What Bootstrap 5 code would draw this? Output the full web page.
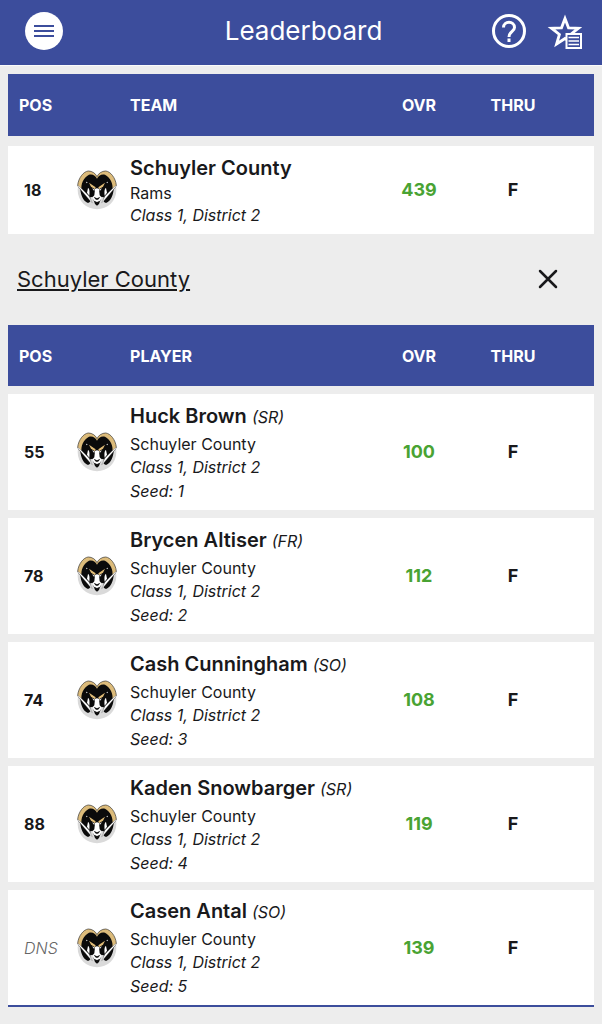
<!DOCTYPE html>
<html lang="en">
<head>
<meta charset="utf-8">
<meta name="viewport" content="width=device-width, initial-scale=1">
<title>Leaderboard</title>
<link href="https://cdn.jsdelivr.net/npm/bootstrap@5.3.0/dist/css/bootstrap.min.css" rel="stylesheet">
<style>
  :root { --brand: #3c4d9c; --page: #ededed; --ink: #19191b; --score: #49a333; }
  body { background: var(--page); color: var(--ink); font-family: Inter, "Liberation Sans", sans-serif; font-size: 16px; line-height: 24px; }
  .topbar { background: var(--brand); height: 66px; padding: 0 20px 3px 25px; border-bottom: 1px solid #fafafa; }
  .topbar h1 { font-size: 26px; line-height: 32px; }
  .side { flex: 1 1 0; }
  .menu-btn { width: 38px; height: 38px; color: var(--brand); }
  .help-btn { margin-right: 18px; }
  .board { table-layout: fixed; border-collapse: separate; border-spacing: 0; }
  .board th, .board td { padding: 0; vertical-align: middle; background-clip: padding-box; border: 0 solid var(--page); border-bottom-width: 8px; }
  .board th { background-color: var(--brand); color: #fff; height: 69px; font-weight: 700; }
  .board td { background-color: #fff; }
  .board.team-board th { border-bottom-width: 10px; height: 72px; }
  .board tbody tr:last-child td { border-bottom-width: 0; }
  .player-board tbody tr:last-child td { border-bottom: 2px solid var(--brand); }
  .player-board td { height: 124px; }
  .player-board tbody tr:last-child td { height: 117px; }
  .team-board td { height: 88px; }
  .board th.pos { padding-left: 11px; }
  .board td.pos { padding-left: 16px; font-weight: 700; }
  .c-pos { width: 69px; } .c-logo { width: 53px; } .c-num { width: 94px; } .c-end { width: 34px; }
  .board .num { text-align: center; font-weight: 700; }
  .board td.ovr { color: var(--score); font-size: 18px; }
  .board td.thru { font-size: 18px; }
  .who { font-size: 20px; line-height: 28px; font-weight: 600; }
  .player-board .who { line-height: 30px; }
  .alt { font-style: italic; font-weight: 400; font-size: 16px; }
  .board td .dns { color: #666; font-weight: 300; }
  .tight { line-height: 22px; }
  .seed { line-height: 26px; }
  .logo { width: 40px; height: 40px; display: block; }
  .section-title { font-size: 22px; line-height: 28px; font-weight: 400; }
  .section-head { height: 91px; padding: 0 33px 2px 9px; }
</style>
</head>
<body>
<svg class="d-none" xmlns="http://www.w3.org/2000/svg">
  <symbol id="ram" viewBox="0 0 120 120">
    <circle cx="60" cy="60" r="58" fill="#dadada"/>
    <path d="M0 0H120V46L60 70 0 46Z" fill="#fff"/>
    <path d="M60 20C56 10 45 3 34 3 20 4 4 24 2 46L16 66 60 50 104 66 118 46C116 24 100 4 86 3 75 3 64 10 60 20Z" fill="#dcbb7a" stroke="#333" stroke-width="2"/>
    <path d="M60 26C56 16 46 11 36 14 20 22 10 42 14 62L34 84 46 80 54 102 60 107 66 102 74 80 86 84 106 62C110 42 100 22 84 14 74 11 64 16 60 26Z" fill="#0b0b0b"/>
    <path d="M10 56C11 76 19 92 31 98 40 99 43 92 38 80L18 52ZM110 56C109 76 101 92 89 98 80 99 77 92 82 80L102 52Z" fill="#0b0b0b"/>
    <path d="M0 46 6 48 36 78 46 98 40 93ZM120 46 114 48 84 78 74 98 80 93Z" fill="#fff" stroke="#555" stroke-width="1"/>
    <path d="M33 54C38 56 38 66 37 77L30 68ZM87 54C82 56 82 66 83 77L90 68Z" fill="#fff"/>
    <path d="M36 38 56 52 54 58 42 50ZM84 38 64 52 66 58 78 50Z" fill="#e1bd78"/>
    <path d="M45 55 54 59 51 62ZM75 55 66 59 69 62ZM27 35l5 2-3 3ZM93 35l-5 2 3 3Z" fill="#fff"/>
    <path d="M54 57Q60 53 66 57L68 76 75 83 68 93 60 98 52 93 45 83 52 76Z" fill="#fff"/>
    <path d="M50 80 60 85 70 80 65 88 60 90 55 88ZM52 93 60 96 68 93 60 102Z" fill="#151515"/>
  </symbol>
</svg>

<header class="topbar d-flex align-items-center text-white">
  <div class="side">
    <button type="button" class="menu-btn btn btn-light bg-white border-0 rounded-circle p-0 d-flex align-items-center justify-content-center" aria-label="Menu">
      <svg width="20" height="14" viewBox="0 0 20 14" stroke="currentColor" stroke-width="2"><path d="M0 2h20M0 7h20M0 12h20"/></svg>
    </button>
  </div>
  <h1 class="m-0 fw-normal">Leaderboard</h1>
  <div class="side d-flex justify-content-end">
    <button type="button" class="help-btn btn border-0 p-0 text-white" aria-label="Help">
      <svg width="40" height="40" viewBox="0 0 40 40" fill="none" stroke="currentColor" stroke-width="3"><circle cx="20" cy="20" r="15.500"/><path d="M14.500 16.500C14.500 9.500 25.500 9.500 25.500 16.500 25.500 20.500 20 20.500 20 26M20 27.500v3.500"/></svg>
    </button>
    <button type="button" class="btn border-0 p-0 text-white" aria-label="Favorites list">
      <svg width="35" height="40" viewBox="0 0 35 40" fill="none" stroke="currentColor"><path d="M18 7.500 21.500 16.800 31.500 17.200 23.600 23.400 26.500 33 18 27.500 9.600 33 12.400 23.400 4.500 17.200 14.500 16.800Z" stroke-width="2.800"/><path d="M19.500 23h14.500v14h-14.500z" fill="#3c4d9c" stroke-width="2"/><path d="M21.500 26.500h10.500M21.500 30h10.500M21.500 33.500h10.500" stroke-width="1.600"/></svg>
    </button>
  </div>
</header>

<main class="px-2 pt-2">
  <table class="board team-board w-100">
    <colgroup><col class="c-pos"><col class="c-logo"><col><col class="c-num"><col class="c-num"><col class="c-end"></colgroup>
    <thead><tr><th class="pos" colspan="2">POS</th><th>TEAM</th><th class="num">OVR</th><th class="num">THRU</th><th></th></tr></thead>
    <tbody>
      <tr><td class="pos">18</td><td><svg class="logo" role="img" aria-label="Rams"><use href="#ram"/></svg></td>
        <td><div class="who">Schuyler County</div><div class="tight">Rams</div><div class="alt tight">Class 1, District 2</div></td>
        <td class="num ovr">439</td><td class="num thru">F</td><td></td></tr>
    </tbody>
  </table>

  <div class="section-head d-flex align-items-center justify-content-between">
    <h2 class="section-title m-0"><a href="#" class="text-reset text-decoration-underline">Schuyler County</a></h2>
    <button type="button" class="btn border-0 p-0 lh-1" aria-label="Close">
      <svg width="26" height="26" viewBox="0 0 26 26" fill="none" stroke="#19191b" stroke-width="2.500" stroke-linecap="round"><path d="M5 5 21 21M21 5 5 21"/></svg>
    </button>
  </div>

  <table class="board player-board w-100">
    <colgroup><col class="c-pos"><col class="c-logo"><col><col class="c-num"><col class="c-num"><col class="c-end"></colgroup>
    <thead><tr><th class="pos" colspan="2">POS</th><th>PLAYER</th><th class="num">OVR</th><th class="num">THRU</th><th></th></tr></thead>
    <tbody>
      <tr><td class="pos">55</td><td><svg class="logo" role="img" aria-label="Rams"><use href="#ram"/></svg></td>
        <td><div class="who">Huck Brown <span class="alt">(SR)</span></div><div>Schuyler County</div><div class="alt tight">Class 1, District 2</div><div class="alt seed">Seed: 1</div></td>
        <td class="num ovr">100</td><td class="num thru">F</td><td></td></tr>
      <tr><td class="pos">78</td><td><svg class="logo" role="img" aria-label="Rams"><use href="#ram"/></svg></td>
        <td><div class="who">Brycen Altiser <span class="alt">(FR)</span></div><div>Schuyler County</div><div class="alt tight">Class 1, District 2</div><div class="alt seed">Seed: 2</div></td>
        <td class="num ovr">112</td><td class="num thru">F</td><td></td></tr>
      <tr><td class="pos">74</td><td><svg class="logo" role="img" aria-label="Rams"><use href="#ram"/></svg></td>
        <td><div class="who">Cash Cunningham <span class="alt">(SO)</span></div><div>Schuyler County</div><div class="alt tight">Class 1, District 2</div><div class="alt seed">Seed: 3</div></td>
        <td class="num ovr">108</td><td class="num thru">F</td><td></td></tr>
      <tr><td class="pos">88</td><td><svg class="logo" role="img" aria-label="Rams"><use href="#ram"/></svg></td>
        <td><div class="who">Kaden Snowbarger <span class="alt">(SR)</span></div><div>Schuyler County</div><div class="alt tight">Class 1, District 2</div><div class="alt seed">Seed: 4</div></td>
        <td class="num ovr">119</td><td class="num thru">F</td><td></td></tr>
      <tr><td class="pos"><span class="alt dns">DNS</span></td><td><svg class="logo" role="img" aria-label="Rams"><use href="#ram"/></svg></td>
        <td><div class="who">Casen Antal <span class="alt">(SO)</span></div><div>Schuyler County</div><div class="alt tight">Class 1, District 2</div><div class="alt seed">Seed: 5</div></td>
        <td class="num ovr">139</td><td class="num thru">F</td><td></td></tr>
    </tbody>
  </table>
</main>
<script src="https://cdn.jsdelivr.net/npm/bootstrap@5.3.0/dist/js/bootstrap.bundle.min.js"></script>
</body>
</html>
